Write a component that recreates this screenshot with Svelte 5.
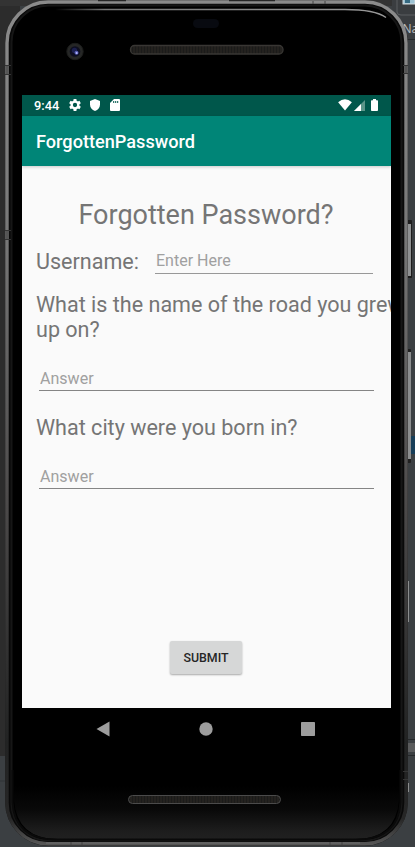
<script>
  const questions = [
    { text: ['What is the name of the road you grew', 'up on?'], field: 'road' },
    { text: ['What city were you born in?'], field: 'city' }
  ];
</script>

<main class="desktop">
  <svg class="device" width="415" height="847" viewBox="0 0 415 847" aria-hidden="true">
    <defs>
      <linearGradient id="rim" x2="0" y2="1">
        <stop offset="0" stop-color="#8b8b8b" />
        <stop offset=".28" stop-color="#777" />
        <stop offset=".6" stop-color="#4b4949" />
        <stop offset=".88" stop-color="#222323" />
        <stop offset=".97" stop-color="#262626" />
        <stop offset="1" stop-color="#555" />
      </linearGradient>
      <linearGradient id="shine" x2="1" y2="0">
        <stop offset="0" stop-color="#777" stop-opacity="0" />
        <stop offset=".15" stop-color="#777" />
        <stop offset="1" stop-color="#999" />
      </linearGradient>
      <linearGradient id="chin" x2="0" y2="1">
        <stop offset="0" stop-color="#000" />
        <stop offset=".45" stop-color="#090909" />
        <stop offset=".85" stop-color="#1d1d1d" />
        <stop offset="1" stop-color="#202020" />
      </linearGradient>
      <pattern id="mesh" width="3" height="3" patternUnits="userSpaceOnUse">
        <rect width="3" height="3" fill="#24221f" />
        <rect width="1" height="3" fill="#1b1b1a" />
      </pattern>
    </defs>
    <rect width="415" height="847" fill="#3b3f42" />
    <rect width="20" height="756" fill="#2c2c2c" />
    <path d="M0 781h10" stroke="#303437" />
    <path d="M0 0h415v6H0z" fill="#333" />
    <rect x="392" width="23" height="40" fill="#3a3d40" />
    <path d="M397 0v12q0 3 4 3h14" fill="none" stroke="#5b5e60" />
    <rect x="403" y="-1" width="12" height="5" fill="#9dc3d4" stroke="#d2d9dc" />
    <rect x="405" y="0" width="5" height="3" fill="#356a82" />
    <path d="M406 39.500h9" stroke="#26292b" />
    <rect x="407" y="436" width="8" height="18" fill="#173d58" />
    <path d="M407 739.500h8M407 755.500h8" stroke="#25282a" />
    <rect x="407" y="743" width="8" height="9" fill="#5a5b5c" />
    <path d="M408.500 581v41M408.500 783v9" stroke="#8b8d8e" />
    <text class="clipped" x="402.500" y="33">Name</text>

    <rect x="407" y="220" width="5" height="58" rx="1" fill="#1d1d1d" />
    <rect x="408" y="224" width="3" height="52" fill="#8f9192" />
    <rect x="407" y="349" width="4" height="114" rx="1" fill="#202020" />
    <rect x="408" y="352" width="3" height="107" fill="#8c8e8f" />

    <rect x="5.500" y=".8" width="402" height="844.700" rx="43" fill="#161616" stroke="#202020" />
    <rect x="7" y="2" width="399" height="841.800" rx="41" fill="#090909" stroke="url(#rim)" stroke-width="3.400" />
    <rect x="11.500" y="5.500" width="390" height="835" rx="37" fill="#000" stroke="#161616" stroke-width="2" />
    <path d="M14 786h385v14q-3 39-44 39H58q-41 0-44-39z" fill="url(#chin)" />
    <path d="M12.500 770v32q2 37 43 37.500h302q41-.5 43-37.500v-32" fill="none" stroke="#0a0a0a" stroke-width="2" />
    <path d="M55 9.500H345q30 0 41 8" fill="none" stroke="url(#shine)" stroke-width="1.400" />
    <path d="M46 843H360" stroke="#666" stroke-width="1.500" />
    <path d="M98 .5h28M229 .5h46" stroke="#262626" stroke-width="1.500" />
    <path d="M313 1v3M325 1v3M71 842v3M82 842v3M330 842v3M342 842v3" fill="none" stroke="#444" />
    <path d="M5 65.500h6M5 74.500h6M5 230.500h6M5 239.500h6M403 65.500h5M403 73.500h5M403 771.500h5M403 779.500h5" stroke="#343434" />
    <path d="M7 66v8M7 231v8M406 66v7" stroke="#555" stroke-width="3" />

    <rect x="193" y="19" width="26" height="9" rx="4.500" fill="#080a10" />
    <circle cx="75" cy="51.500" r="8.200" fill="#262726" stroke="#1c1d1c" />
    <circle cx="75" cy="51.500" r="5.300" fill="#0d0e20" />
    <circle cx="74.500" cy="50.500" r="2.700" fill="#1c204f" />
    <circle cx="76.500" cy="52.800" r="2" fill="#555bb2" />
    <circle cx="76.700" cy="53" r="1" fill="#b4b8ff" />
    <rect x="130.500" y="45.500" width="152.500" height="8.500" rx="4" fill="url(#mesh)" stroke="#393734" stroke-width="1.300" />
    <rect x="128.500" y="795.500" width="152" height="8" rx="4" fill="url(#mesh)" stroke="#4b4b4b" />
  </svg>

  <section class="screen">
    <header class="status">
      <span class="clock">9:44</span>
      <svg class="gear" width="12" height="12" viewBox="2 2 20 20"><path fill="#fff" d="M19.400 13.200q.2-1.200 0-2.400l2.300-1.700-2.300-4-2.600 1.100q-1-.8-2.100-1.200L14.300 2H9.700l-.4 3q-1.200.4-2.100 1.200L4.600 5.100l-2.300 4 2.300 1.700q-.2 1.200 0 2.400l-2.300 1.700 2.300 4 2.600-1.100q1 .8 2.100 1.200l.4 3h4.600l.4-3q1.200-.4 2.100-1.200l2.600 1.100 2.300-4zM12 15.600a3.600 3.600 0 1 1 0-7.200 3.600 3.600 0 0 1 0 7.200" /></svg>
      <svg class="shield" width="10" height="12" viewBox="0 0 10 12"><path fill="#fff" d="M5 0l5 2v3.500C10 8.500 8 11 5 12 2 11 0 8.500 0 5.500V2z" /></svg>
      <svg class="card" width="10" height="12" viewBox="0 0 10 12"><path fill="#fff" fill-rule="evenodd" d="M4 0h5q1 0 1 1v10q0 1-1 1H1q-1 0-1-1V4zM3.200 2v2h1V2zm2 0v2h1V2zm2 0v2h1V2z" /></svg>
      <svg class="wifi" width="14" height="12" viewBox="0 0 14 12"><path fill="#fff" d="M7 11.500.1 3.200Q7-2.500 13.900 3.200z" /></svg>
      <svg class="signal" width="11" height="11" viewBox="0 0 11 11"><path fill="#5c9589" d="M0 11 11 0v11z" /><path fill="#fff" d="M0 11 7 4v7z" /></svg>
      <svg class="battery" width="7" height="12" viewBox="0 0 7 12"><path fill="#fff" d="M2 0h3v1.300h1.200q.8 0 .8.800v9q0 .9-.8.900H.8Q0 12 0 11.100v-9q0-.8.800-.8H2z" /></svg>
    </header>
    <div class="appbar">ForgottenPassword</div>

    <form class="content" onsubmit={(e) => e.preventDefault()}>
      <h1>Forgotten Password?</h1>
      <div class="user">
        <label for="username">Username:</label>
        <input id="username" placeholder="Enter Here" />
      </div>
      {#each questions as q}
        <div class="question">
          <label for={q.field}>{#each q.text as line}<span>{line}</span>{/each}</label>
          <input id={q.field} placeholder="Answer" />
        </div>
      {/each}
      <button>SUBMIT</button>
    </form>
  </section>

  <nav class="keys" aria-label="System navigation">
    <svg width="14" height="16" viewBox="0 0 14 16"><path fill="#9d9d9d" d="M13.500.5v15L.5 8z" /></svg>
    <svg width="14" height="14" viewBox="0 0 14 14"><circle cx="7" cy="7" r="6.700" fill="#9d9d9d" /></svg>
    <svg width="14" height="14" viewBox="0 0 14 14"><rect width="14" height="14" rx=".7" fill="#9d9d9d" /></svg>
  </nav>
</main>

<style>
  :global(body) { margin: 0; }
  .desktop {
    position: relative;
    isolation: isolate;
    box-sizing: border-box;
    width: 415px;
    height: 847px;
    padding: 95px 24px 0 22px;
    overflow: hidden;
    font-family: Roboto, sans-serif;
  }
  svg { display: block; flex: none; }
  .device { position: absolute; inset: 0; z-index: -1; }
  .clipped { font: 12px "Noto Sans", sans-serif; fill: #b5b8ba; }
  .screen {
    display: flex;
    flex-direction: column;
    width: 369px;
    height: 613px;
    overflow: hidden;
    background: #fafafa;
  }
  .status {
    display: flex;
    align-items: center;
    flex: none;
    height: 21px;
    box-sizing: border-box;
    padding: 0 13px 1px 12px;
    background: #00574b;
    color: #fff;
  }
  .clock { width: 35px; padding-top: 1px; font-size: 12.800px; font-weight: 500; line-height: 20px; }
  .shield { margin-left: 9px; }
  .card { margin-left: 10px; }
  .wifi { margin-left: auto; }
  .signal { margin-left: 2px; }
  .battery { margin-left: 6px; }
  .appbar {
    flex: none;
    height: 50px;
    padding-left: 14px;
    background: #008577;
    color: #fff;
    font-size: 18.150px;
    font-weight: 500;
    line-height: 51px;
    box-shadow: 0 1px 3px #0003;
  }
  .content {
    display: flex;
    flex-direction: column;
    flex: 1;
    padding: 33px 17px 34px 14px;
    color: #757575;
  }
  h1 {
    margin: 0;
    padding-left: 2px;
    text-align: center;
    font-size: 27px;
    font-weight: 400;
    line-height: 32px;
    white-space: nowrap;
  }
  label { font-size: 21.550px; line-height: 25px; white-space: nowrap; }
  input {
    box-sizing: border-box;
    min-width: 0;
    height: 26px;
    margin: 0;
    padding: 0;
    border: 0;
    border-bottom: 1px solid #989898;
    border-radius: 0;
    outline: 0;
    background: none;
    color: #333;
    font: 16.050px Roboto, sans-serif;
  }
  input::placeholder { color: #a0a0a0; opacity: 1; }
  .user { display: flex; align-items: center; height: 26px; margin-top: 17px; }
  .user label { width: 119px; }
  .user input { flex: 1; margin-right: 1px; padding-left: 1px; }
  .question { display: flex; flex-direction: column; margin-top: 18px; }
  .question + .question { margin-top: 24px; }
  .question span { display: block; }
  .question input { margin: 23px 0 0 3px; padding: 2px 0 0 1px; border-color: #858585; }
  button {
    align-self: center;
    width: 72px;
    height: 33px;
    margin: auto 0 0 1px;
    padding: 0 0 0 1px;
    border: 0;
    border-radius: 2px;
    background: #d6d7d7;
    color: #262626;
    box-shadow: 0 1px 2px #0005;
    font: 500 12.400px Roboto, sans-serif;
  }
  .keys {
    display: flex;
    align-items: center;
    justify-content: space-between;
    height: 42px;
    padding: 0 76px 0 74px;
  }
</style>
